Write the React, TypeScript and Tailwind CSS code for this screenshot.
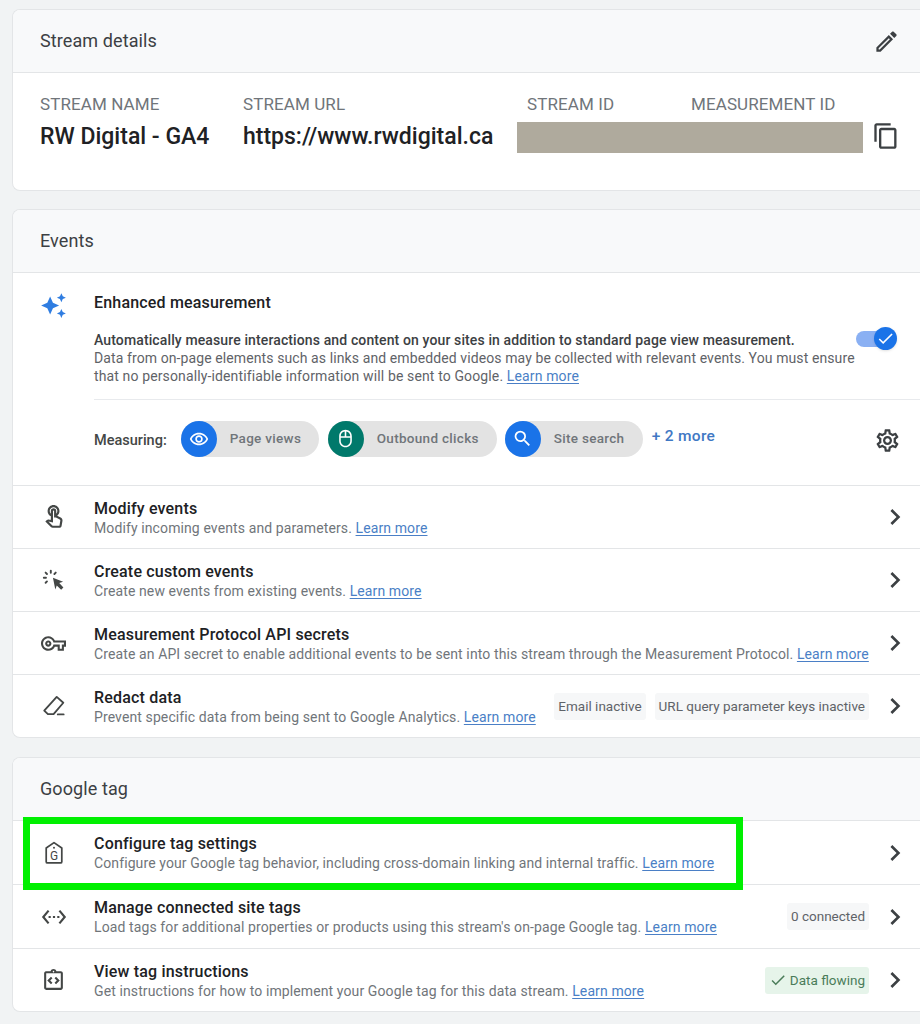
import type { ReactNode } from "react";
import {
  MdAutoAwesome,
  MdCheck,
  MdChevronRight,
  MdContentCopy,
  MdOutlineEdit,
  MdOutlineMouse,
  MdOutlineRemoveRedEye,
  MdOutlineSettings,
  MdOutlineTouchApp,
  MdOutlineVpnKey,
  MdSearch,
  MdSettingsEthernet,
  MdOutlineIntegrationInstructions,
} from "react-icons/md";

function Learn() {
  return <a className="text-[#4a7fc6] underline underline-offset-2">Learn more</a>;
}

function ClickIcon() {
  return (
    <svg width="27" height="27" viewBox="0 0 24 24" fill="none" stroke="#444746" strokeWidth="1.7" strokeLinecap="round">
      <path d="M11.5 9.5 20.5 13l-3.4 1.3 3.7 3.9-2 2-3.9-3.8L13.6 20z" fill="#444746" stroke="none" />
      <path d="M9.6 3.2v1.9M3.4 9.6h1.9M5 5l1.2 1.2M14 5l-1.2 1.2M5 14l1.2-1.2" />
    </svg>
  );
}

function EraserIcon() {
  return (
    <svg width="26" height="26" viewBox="0 0 24 24" fill="none" stroke="#444746" strokeWidth="1.7" strokeLinejoin="round" strokeLinecap="round">
      <path d="M14.5 3.6 20.6 9 11.6 19.5H6.4L3 16.2z" />
      <path d="M15.5 19.8h5.4" />
    </svg>
  );
}

function TagIcon() {
  return (
    <svg width="26" height="26" viewBox="0 0 24 24" fill="none" stroke="#444746" strokeWidth="1.6" strokeLinejoin="round">
      <path d="M12 2.4 19.2 7.4V20a1.2 1.2 0 0 1-1.2 1.2H6A1.2 1.2 0 0 1 4.8 20V7.4z" />
      <circle cx="12" cy="7.2" r="0.9" fill="#444746" stroke="none" />
      <text x="12" y="18.3" textAnchor="middle" fontFamily="Roboto" fontSize="11" fill="#444746" stroke="none">
        G
      </text>
    </svg>
  );
}

function Chip({ children, green }: { children: ReactNode; green?: boolean }) {
  return (
    <span
      className={`flex h-[27px] items-center rounded-[3px] px-[4px] text-[13.5px] whitespace-nowrap ${
        green ? "bg-[#e6f4ea] text-[#4a7c59]" : "bg-[#f6f7f8] text-[#5f6368]"
      }`}
    >
      {children}
    </span>
  );
}

function Row({
  icon,
  title,
  sub,
  right,
  first,
  tall,
  textOffset = "pt-[3px]",
}: {
  icon: ReactNode;
  title: string;
  sub: ReactNode;
  right?: ReactNode;
  first?: boolean;
  tall?: boolean;
  textOffset?: string;
}) {
  return (
    <div className={`flex items-center pr-[9px] ${tall ? "h-[64px]" : "h-[63px]"} ${first ? "" : "border-t border-[#e3e5e7]"}`}>
      <div className="flex w-[81px] shrink-0 justify-center text-[#444746]">{icon}</div>
      <div className={`min-w-0 flex-1 ${textOffset}`}>
        <div className="text-[16px] leading-[20px] font-medium tracking-[0.18px] text-[#202124]">{title}</div>
        <div className="text-[14px] leading-[19px] tracking-[0.11px] whitespace-nowrap text-[#70757a]">{sub}</div>
      </div>
      {right && <div className="mr-[10px] flex items-center gap-[9px]">{right}</div>}
      <MdChevronRight size={32} className="shrink-0 text-[#3c4043]" />
    </div>
  );
}

function Pill({ color, icon, label, width }: { color: string; icon: ReactNode; label: string; width: string }) {
  return (
    <div className={`flex h-[36px] items-center rounded-full bg-[#e3e3e3] ${width}`}>
      <span className={`flex h-[36px] w-[36px] shrink-0 items-center justify-center rounded-full text-white ${color}`}>
        {icon}
      </span>
      <span className="ml-[13px] text-[13.5px] font-medium tracking-[0.3px] whitespace-nowrap text-[#70757a]">{label}</span>
    </div>
  );
}

function CardHeader({ title, action }: { title: string; action?: ReactNode }) {
  return (
    <div className="flex h-[63px] items-center justify-between border-b border-[#e3e5e7] bg-[#f8f9fa] pr-[20px] pl-[27px]">
      <span className="pb-[2px] text-[18px] tracking-[0.1px] text-[#3c4043]">{title}</span>
      {action}
    </div>
  );
}

const cardClass = "rounded-l-[8px] border border-r-0 border-[#e3e5e7] bg-white overflow-hidden";

export default function App() {
  return (
    <div className="relative h-[1024px] w-[920px] overflow-hidden bg-[#f1f3f4] pt-[9px] pl-[12px] font-['Roboto',sans-serif]">
      <div className={`${cardClass} h-[182px]`}>
        <CardHeader title="Stream details" action={<MdOutlineEdit size={27} className="text-[#3c4043]" />} />
        <div className="flex pt-[21px] pl-[27px]">
          <div className="w-[203px]">
            <div className="text-[17px] leading-[20px] tracking-[0.1px] text-[#70757a]">STREAM NAME</div>
            <div className="mt-[9px] text-[23px] leading-[28px] font-medium text-[#202124]">RW Digital - GA4</div>
          </div>
          <div className="w-[274px]">
            <div className="text-[17px] leading-[20px] tracking-[0.1px] text-[#70757a]">STREAM URL</div>
            <div className="mt-[9px] text-[23px] leading-[28px] font-medium whitespace-nowrap text-[#202124]">https://www.rwdigital.ca</div>
          </div>
          <div className="w-[346px]">
            <div className="flex pl-[10px] text-[17px] leading-[20px] tracking-[0.1px] text-[#70757a]">
              <span className="w-[164px]">STREAM ID</span>
              <span>MEASUREMENT ID</span>
            </div>
            <div className="mt-[8px] h-[31px] w-[346px] bg-[#afaa9d]" />
          </div>
          <MdContentCopy size={28} className="mt-[28px] ml-[9px] text-[#3c4043]" />
        </div>
      </div>

      <div className={`${cardClass} mt-[18px] h-[529px]`}>
        <CardHeader title="Events" />
        <div className="flex h-[212px]">
          <div className="flex w-[81px] shrink-0 justify-center pt-[19px]">
            <MdAutoAwesome size={27} className="text-[#2f7de1]" />
          </div>
          <div className="min-w-0 flex-1">
            <div className="pt-[20px] text-[16px] leading-[20px] font-medium tracking-[0.18px] text-[#202124]">Enhanced measurement</div>
            <div className="mt-[18px] flex h-[69px] border-b border-[#e8eaed]">
              <div className="w-[762px] text-[14px] leading-[18px] tracking-[0.1px] whitespace-nowrap text-[#5f6368]">
                <div className="font-medium tracking-[0.12px] text-[#3c4043]">
                  Automatically measure interactions and content on your sites in addition to standard page view measurement.
                </div>
                <div>Data from on-page elements such as links and embedded videos may be collected with relevant events. You must ensure</div>
                <div className="tracking-[0.13px]">
                  that no personally-identifiable information will be sent to Google. <Learn />
                </div>
              </div>
              <div className="relative -mt-[4px] h-[24px] w-[40px]">
                <span className="absolute top-[4px] left-0 h-[16px] w-[36px] rounded-full bg-[#8ab0f3]" />
                <span className="absolute top-0 left-[18px] flex h-[23px] w-[23px] items-center justify-center rounded-full bg-[#1a73e8] text-white shadow-sm">
                  <MdCheck size={19} />
                </span>
              </div>
            </div>
            <div className="flex h-[85px] items-center pr-[19px] pb-[8px]">
              <span className="mt-[4px] mr-[14px] text-[14.5px] font-medium text-[#444746]">Measuring:</span>
              <div className="flex items-center">
                <Pill color="bg-[#1a73e8]" icon={<MdOutlineRemoveRedEye size={20} />} label="Page views" width="w-[138px] mr-[9px]" />
                <Pill color="bg-[#00796b]" icon={<MdOutlineMouse size={19} />} label="Outbound clicks" width="w-[169px] mr-[8px]" />
                <Pill color="bg-[#1a73e8]" icon={<MdSearch size={21} />} label="Site search" width="w-[138px]" />
              </div>
              <span className="mb-[4px] ml-[9px] text-[15.5px] font-medium tracking-[0.3px] text-[#3f78c4]">+ 2 more</span>
              <MdOutlineSettings size={27} className="mt-[4px] ml-auto text-[#3c4043]" />
            </div>
          </div>
        </div>
        <Row
          icon={<MdOutlineTouchApp size={26} />}
          title="Modify events"
          sub={<>Modify incoming events and parameters. <Learn /></>}
        />
        <Row
          icon={<ClickIcon />}
          title="Create custom events"
          sub={<>Create new events from existing events. <Learn /></>}
        />
        <Row
          icon={<MdOutlineVpnKey size={25} />}
          title="Measurement Protocol API secrets"
          sub={<>Create an API secret to enable additional events to be sent into this stream through the Measurement Protocol. <Learn /></>}
        />
        <Row
          icon={<EraserIcon />}
          title="Redact data"
          sub={<>Prevent specific data from being sent to Google Analytics. <Learn /></>}
          right={
            <>
              <Chip>Email inactive</Chip>
              <Chip>URL query parameter keys inactive</Chip>
            </>
          }
        />
      </div>

      <div className={`${cardClass} mt-[19px] h-[255px]`}>
        <CardHeader title="Google tag" />
        <Row
          first
          textOffset="pt-[1px]"
          icon={<TagIcon />}
          title="Configure tag settings"
          sub={<>Configure your Google tag behavior, including cross-domain linking and internal traffic. <Learn /></>}
        />
        <Row
          tall
          textOffset="pt-[1px]"
          icon={<MdSettingsEthernet size={26} />}
          title="Manage connected site tags"
          sub={<>Load tags for additional properties or products using this stream's on-page Google tag. <Learn /></>}
          right={<Chip>0 connected</Chip>}
        />
        <Row
          textOffset="pt-[2px]"
          icon={<MdOutlineIntegrationInstructions size={25} />}
          title="View tag instructions"
          sub={<>Get instructions for how to implement your Google tag for this data stream. <Learn /></>}
          right={
            <Chip green>
              <MdCheck size={18} className="mr-[3px]" />
              Data flowing
            </Chip>
          }
        />
      </div>

      {/* annotation drawn over the screenshot */}
      <div className="absolute top-[817px] left-[23px] h-[73px] w-[720px] border-[7px] border-[#00f000]" />
    </div>
  );
}
